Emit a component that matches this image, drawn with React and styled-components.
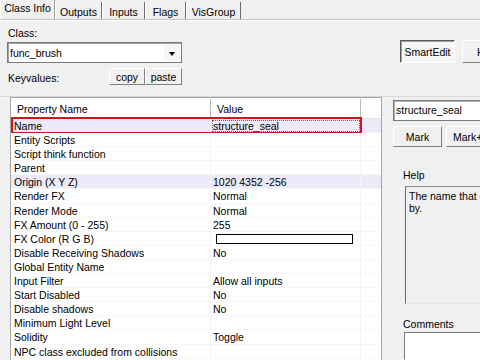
import React from "react";
import styled, { createGlobalStyle } from "styled-components";

const Global = createGlobalStyle`
  html, body { margin: 0; padding: 0; }
  body {
    width: 480px; height: 360px; overflow: hidden;
    background: #f0f0f0;
    font-family: "Liberation Sans", Arial, sans-serif;
    font-size: 10.5px; color: #000;
  }
`;

const Page = styled.div`
  width: 480px; height: 360px; overflow: hidden;
  display: flex; flex-direction: column;
`;

const TabBar = styled.div`
  display: flex; height: 19px; flex: none;
  border-bottom: 1px solid #c4c4c4;
  box-shadow: 0 1px 0 #fff;
`;

const Tab = styled.div`
  width: ${p => p.w}px; box-sizing: border-box; flex: none;
  display: flex; justify-content: center;
  align-items: flex-start;
  padding-top: ${p => (p.active ? "2px" : "4px")};
  border-right: 1px solid ${p => (p.active ? "#a0a0a0" : "#6e6e6e")};
  border-left: 1px solid #fff;
  margin-top: ${p => (p.active ? "0" : "2px")};
  line-height: 13px;
`;

const Top = styled.div`
  height: 77px; flex: none; display: flex; padding-left: 7px;
  border-bottom: 1px solid #d8d8d8;
  box-sizing: border-box;
`;

const LeftTop = styled.div`
  width: 175px; flex: none; display: flex; flex-direction: column; padding-top: 7px;
`;

const Label = styled.div`
  line-height: 13px; padding-left: ${p => p.pl || 0}px;
`;

const Combo = styled.div`
  margin-top: 2px; height: 21px; box-sizing: border-box;
  background: #fff; border: 1px solid #7a7a7a;
  box-shadow: inset 1px 1px 0 #a0a0a0;
  display: flex; align-items: center; justify-content: space-between;
  padding-left: 2px;
`;

const ComboArrow = styled.div`
  width: 16px; height: 17px; margin-right: 1px;
  background: #f6f6f6; display: flex; align-items: center; justify-content: center;
  &::after {
    content: ""; border-left: 3.5px solid transparent; border-right: 3.5px solid transparent;
    border-top: 4px solid #000; margin-top: 2px;
  }
`;

const KvRow = styled.div`
  margin-top: 5px; display: flex; align-items: center; height: 17px;
`;

const KvLabel = styled.div`
  padding-left: 1px; padding-top: 3px; flex: 1;
`;

const Btn = styled.div`
  box-sizing: border-box; width: ${p => p.w}px; height: ${p => p.h}px;
  margin-left: ${p => p.ml || 0}px;
  display: flex; align-items: center; justify-content: ${p => (p.left ? "flex-start" : "center")};
  padding-left: ${p => p.pl || 0}px;
  border: 1px solid; border-color: #fff #808080 #808080 #fff;
  background: #f0f0f0; flex: none; white-space: nowrap; overflow: hidden;
`;

const ToggleBtn = styled(Btn)`
  border-color: #5a5a5a #fff #fff #5a5a5a;
  box-shadow: inset 1px 1px 0 #a0a0a0;
  background: #f6f6f6;
`;

const BtnGroup = styled.div`
  margin-left: 218px; margin-top: 20px; display: flex; height: 23px; flex: none;
`;

const Bottom = styled.div`
  flex: 1; display: flex; min-height: 0;
`;

const List = styled.div`
  margin-left: 10px; width: 372px; box-sizing: border-box; flex: none;
  border: 1px solid #a5a5a5; border-bottom: none;
  background: #fff; padding-top: 1px;
  display: flex; flex-direction: column;
`;

const Header = styled.div`
  display: grid; grid-template-columns: 200px 150px 1fr; height: 20px;
  box-sizing: border-box; border-bottom: 1px solid #e3e3e3; flex: none;
`;

const HeadCell = styled.div`
  padding: 3px 0 0 6px; line-height: 14px;
  border-right: 1px solid ${p => (p.last ? "transparent" : "#b8b8b8")};
`;

const Row = styled.div`
  position: relative; flex: none;
  display: grid; grid-template-columns: 200px 150px 1fr; height: 14.1px;
  line-height: 14px;
  background: ${p => (p.hl ? "#eaeaf8" : "#fff")};
  &::after {
    content: ""; display: ${p => (p.marked ? "block" : "none")};
    position: absolute; left: 0; top: -2px; width: 351px; height: 17px;
    box-sizing: border-box; border: 2px solid #d0161b;
  }
`;

const Cell = styled.div`
  padding-left: ${p => p.pl}px; white-space: nowrap; overflow: hidden;
  border-right: 1px solid ${p => (p.last ? "transparent" : "#f4f4f4")};
  box-shadow: inset 0 -1px 0 #f6f6f6;
  ${p => p.focus && `outline: 1px dotted #666; outline-offset: -2px;`}
`;

const ColorBox = styled.div`
  margin-top: 2px; width: 137px; height: 10px; box-sizing: border-box;
  border: 1px solid #000; background: #fff; margin-left: 3px;
`;

const Right = styled.div`
  margin-left: 11px; display: flex; flex-direction: column; flex: none; width: 260px;
`;

const TextInput = styled.div`
  margin-top: 3px; height: 21px; width: 100px; box-sizing: border-box;
  background: #fff; border: 1px solid #7a7a7a; box-shadow: inset 1px 1px 0 #b0b0b0;
  padding-left: 2px; line-height: 19px;
`;

const MarkRow = styled.div`
  margin-top: 5px; display: flex; height: 21px;
`;

const SideLabel = styled.div`
  margin-top: ${p => p.mt}px; padding-left: 10px; line-height: 13px;
`;

const HelpBox = styled.div`
  margin-top: 4px; margin-left: 12px; width: 250px; height: 118px; box-sizing: border-box;
  border: 1px solid; border-color: #8a8a8a #fff #e8e8e8 #6a6a6a;
  padding: 3px 3px; line-height: 12px; white-space: pre-line;
`;

const CommentBox = styled.div`
  margin-top: 1px; margin-left: 11px; width: 200px; flex: 1; box-sizing: border-box;
  background: #fff; border: 1px solid; border-color: #7a7a7a #fff #fff #7a7a7a;
`;

const rows = [
  ["Name", "structure_seal", { hl: true, marked: true, focus: true }],
  ["Entity Scripts", ""],
  ["Script think function", ""],
  ["Parent", ""],
  ["Origin (X Y Z)", "1020 4352 -256", { hl: true }],
  ["Render FX", "Normal"],
  ["Render Mode", "Normal"],
  ["FX Amount (0 - 255)", "255"],
  ["FX Color (R G B)", null, { color: true }],
  ["Disable Receiving Shadows", "No"],
  ["Global Entity Name", ""],
  ["Input Filter", "Allow all inputs"],
  ["Start Disabled", "No"],
  ["Disable shadows", "No"],
  ["Minimum Light Level", ""],
  ["Solidity", "Toggle"],
  ["NPC class excluded from collisions", ""],
];

const tabs = [
  ["Class Info", 55, true],
  ["Outputs", 47],
  ["Inputs", 43],
  ["Flags", 41],
  ["VisGroup", 55],
];

export default function App() {
  return (
    <Page>
      <Global />
      <TabBar>
        {tabs.map(([t, w, a]) => (
          <Tab key={t} w={w} active={a}>{t}</Tab>
        ))}
      </TabBar>
      <Top>
        <LeftTop>
          <Label pl={1}>Class:</Label>
          <Combo>
            <span>func_brush</span>
            <ComboArrow />
          </Combo>
          <KvRow>
            <KvLabel>Keyvalues:</KvLabel>
            <Btn w={36} h={17}>copy</Btn>
            <Btn w={37} h={17}>paste</Btn>
          </KvRow>
        </LeftTop>
        <BtnGroup>
          <ToggleBtn w={55} h={23}>SmartEdit</ToggleBtn>
          <Btn w={60} h={23} ml={7} left pl={14}>Help</Btn>
        </BtnGroup>
      </Top>
      <Bottom>
        <List>
          <Header>
            <HeadCell>Property Name</HeadCell>
            <HeadCell>Value</HeadCell>
            <HeadCell last />
          </Header>
          {rows.map(([k, v, o = {}]) => (
            <Row key={k} hl={o.hl} marked={o.marked}>
              <Cell pl={3}>{k}</Cell>
              <Cell pl={2} focus={o.focus}>
                {o.color ? <ColorBox /> : v}
              </Cell>
              <Cell last pl={0} />
            </Row>
          ))}
        </List>
        <Right>
          <TextInput>structure_seal</TextInput>
          <MarkRow>
            <Btn w={49} h={21}>Mark</Btn>
            <Btn w={60} h={21} ml={4} left pl={6}>Mark+Add</Btn>
          </MarkRow>
          <SideLabel mt={22}>Help</SideLabel>
          <HelpBox>{"The name that other entities refer to this entity\nby."}</HelpBox>
          <SideLabel mt={14}>Comments</SideLabel>
          <CommentBox />
        </Right>
      </Bottom>
    </Page>
  );
}
